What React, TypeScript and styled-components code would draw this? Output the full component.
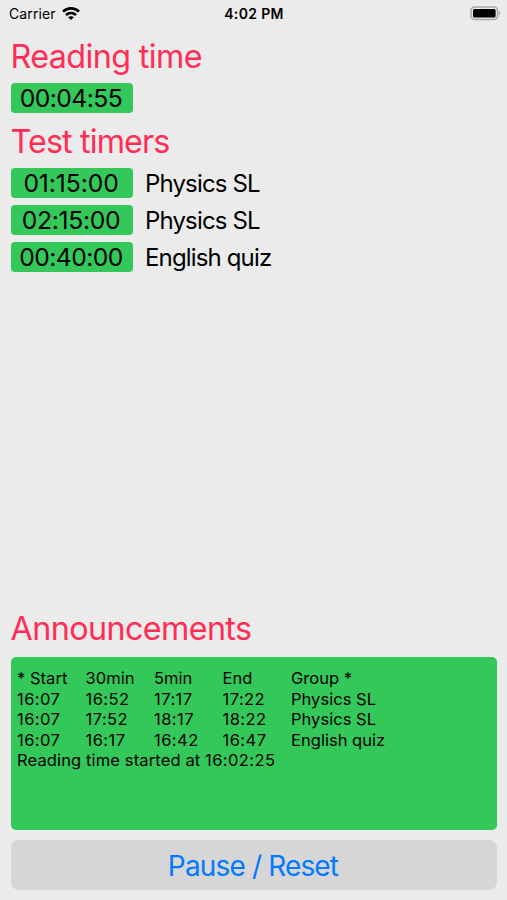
import React from "react";
import styled, { createGlobalStyle } from "styled-components";

const Global = createGlobalStyle`
  * { box-sizing: border-box; }
  body { margin: 0; background: #ebebeb; font-family: Inter, sans-serif; color: #000; }
`;

const Screen = styled.main`
  display: flex;
  flex-direction: column;
  width: 507px;
  height: 900px;
  overflow: hidden;
  padding: 0 10px 10px 11px;
  background: #ebebeb;
  white-space: nowrap;
`;

const StatusBar = styled.header`
  display: grid;
  grid-template-columns: 1fr auto 1fr;
  align-items: center;
  height: 27px;
  flex: none;
  margin: 0 -4px 0 -2px;
  font-size: 14px;
`;

const Carrier = styled.div`
  display: flex;
  align-items: center;
  gap: 6px;
  letter-spacing: 0.1px;
`;

const Clock = styled.time`
  padding-right: 2px;
  font-weight: 600;
  letter-spacing: 0.35px;
`;

const Battery = styled.div`
  display: flex;
  justify-content: flex-end;
`;

const Heading = styled.h1<{ $top: number; $spacing: number }>`
  flex: none;
  margin: ${(p) => p.$top}px 0 0 -0.5px;
  height: 40px;
  line-height: 42px;
  font-size: 32.3px;
  font-weight: 400;
  letter-spacing: ${(p) => p.$spacing}px;
  color: #ff2d55;
`;

const TimerList = styled.div<{ $top: number }>`
  display: grid;
  gap: 7px;
  margin-top: ${(p) => p.$top}px;
`;

const TimerRow = styled.div`
  display: flex;
  align-items: center;
  height: 30px;
  gap: 12px;
`;

const TimerBadge = styled.div<{ $spacing: number }>`
  width: 122px;
  height: 30px;
  padding-right: 2px;
  line-height: 31px;
  border-radius: 4px;
  background: #34c759;
  text-align: center;
  font-size: 24.7px;
  letter-spacing: ${(p) => p.$spacing}px;
`;

const Subject = styled.span`
  font-size: 24px;
  letter-spacing: -0.85px;
`;

const Spacer = styled.div`
  flex: 1;
`;

const Log = styled.section`
  flex: none;
  height: 173px;
  margin-top: 9px;
  padding: 11px 6px;
  border-radius: 5px;
  background: #34c759;
  font-size: 16.5px;
  line-height: 20.5px;
`;

const LogRow = styled.div`
  display: grid;
  grid-template-columns: 68.5px 68.5px 68.5px 68.5px 1fr;
`;

const LogCell = styled.span<{ $spacing: number }>`
  letter-spacing: ${(p) => p.$spacing}px;
`;

const ResetButton = styled.button`
  flex: none;
  height: 50px;
  margin-top: 10px;
  padding: 3px 2px 0 0;
  border: 0;
  border-radius: 8px;
  background: #d6d6d6;
  color: #007aff;
  font: 400 28px/47px Inter, sans-serif;
  letter-spacing: -0.85px;
`;

const timers = [
  { time: "01:15:00", subject: "Physics SL", spacing: -0.1 },
  { time: "02:15:00", subject: "Physics SL", spacing: -0.35 },
  { time: "00:40:00", subject: "English quiz", spacing: -0.55 },
];

const schedule = [
  ["* Start", "30min", "5min", "End", "Group *"],
  ["16:07", "16:52", "17:17", "17:22", "Physics SL"],
  ["16:07", "17:52", "18:17", "18:22", "Physics SL"],
  ["16:07", "16:17", "16:42", "16:47", "English quiz"],
];

const WifiIcon = () => (
  <svg width="18" height="14" viewBox="0 0 18 14" fill="none" stroke="#000" strokeWidth="2.6">
    <path d="M1 4.7C5.4.3 12.6.3 17 4.7" />
    <path d="M4 8C6.8 5.3 11.2 5.3 14 8" />
    <path d="M9 13 6.2 10.2C7.8 8.8 10.2 8.8 11.8 10.2Z" fill="#000" stroke="none" />
  </svg>
);

const BatteryIcon = () => (
  <svg width="31" height="15" viewBox="0 0 31 15">
    <rect x="1" y=".9" width="26.6" height="12.6" rx="3.8" fill="none" stroke="#a8a8a8" strokeWidth="1.5" />
    <rect x="3" y="2.9" width="22.6" height="8.6" rx="1.5" />
    <path d="M28.8 5.2C30.7 5.8 30.7 8.6 28.8 9.2Z" fill="#a8a8a8" />
  </svg>
);

export default function App() {
  return (
    <>
      <Global />
      <Screen>
        <StatusBar>
          <Carrier>Carrier <WifiIcon /></Carrier>
          <Clock>4:02 PM</Clock>
          <Battery><BatteryIcon /></Battery>
        </StatusBar>
        <Heading $top={9} $spacing={-0.6}>Reading time</Heading>
        <TimerList $top={7}>
          <TimerRow><TimerBadge $spacing={-0.55}>00:04:55</TimerBadge></TimerRow>
        </TimerList>
        <Heading $top={8} $spacing={-0.87}>Test timers</Heading>
        <TimerList $top={7}>
          {timers.map(({ time, subject, spacing }) => (
            <TimerRow key={time}>
              <TimerBadge $spacing={spacing}>{time}</TimerBadge>
              <Subject>{subject}</Subject>
            </TimerRow>
          ))}
        </TimerList>
        <Spacer />
        <Heading $top={0} $spacing={-0.6}>Announcements</Heading>
        <Log>
          {schedule.map((row, i) => (
            <LogRow key={i}>
              {row.map((cell, j) => (
                <LogCell key={j} $spacing={cell.includes(":") ? 0.45 : 0.03}>{cell}</LogCell>
              ))}
            </LogRow>
          ))}
          <div>
            <LogCell $spacing={0.13}>Reading time started at </LogCell>
            <LogCell $spacing={0.4}>16:02:25</LogCell>
          </div>
        </Log>
        <ResetButton>Pause / Reset</ResetButton>
      </Screen>
    </>
  );
}
